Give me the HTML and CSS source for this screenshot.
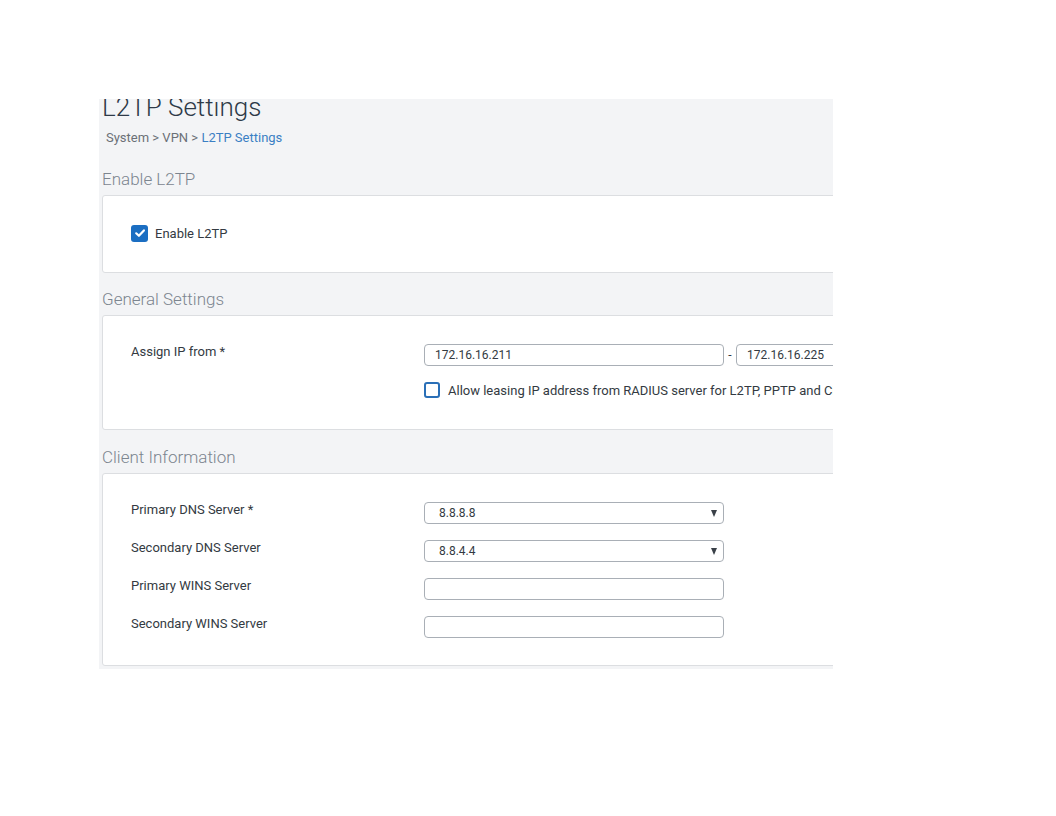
FILE: index.html
```html
<!DOCTYPE html>
<html>
<head>
<meta charset="utf-8">
<link rel="stylesheet" href="styles.css">
</head>
<body>
<div class="frame">
  <div class="content">
    <h1 class="title">L2TP Settings</h1>
    <div class="crumbs">System &gt; VPN &gt; <span class="crumb-current">L2TP Settings</span></div>

    <h2 class="section-title">Enable L2TP</h2>
    <div class="panel panel-enable">
      <label class="check-row">
        <span class="checkbox checked">
          <svg viewBox="0 0 12 12" width="12" height="12"><path d="M2.2 6.3 L4.9 8.8 L9.9 3.4" fill="none" stroke="#fff" stroke-width="2.2" stroke-linecap="round" stroke-linejoin="round"/></svg>
        </span>
        <span class="check-label">Enable L2TP</span>
      </label>
    </div>

    <h2 class="section-title">General Settings</h2>
    <div class="panel panel-general">
      <div class="form-row">
        <div class="field-label">Assign IP from *</div>
        <div class="field-control">
          <div class="range">
            <div class="input">172.16.16.211</div>
            <span class="dash">-</span>
            <div class="input">172.16.16.225</div>
          </div>
          <label class="check-row sub-check">
            <span class="checkbox outline"></span>
            <span class="check-label nowrap">Allow leasing IP address from RADIUS server for L2TP, PPTP and Cisco VPN clients</span>
          </label>
        </div>
      </div>
    </div>

    <h2 class="section-title">Client Information</h2>
    <div class="panel panel-client">
      <div class="form-row">
        <div class="field-label">Primary DNS Server *</div>
        <div class="field-control"><div class="select"><span>8.8.8.8</span><span class="caret"></span></div></div>
      </div>
      <div class="form-row">
        <div class="field-label">Secondary DNS Server</div>
        <div class="field-control"><div class="select"><span>8.8.4.4</span><span class="caret"></span></div></div>
      </div>
      <div class="form-row">
        <div class="field-label">Primary WINS Server</div>
        <div class="field-control"><div class="input"></div></div>
      </div>
      <div class="form-row">
        <div class="field-label">Secondary WINS Server</div>
        <div class="field-control"><div class="input"></div></div>
      </div>
    </div>
  </div>
</div>
</body>
</html>
```

FILE: styles.css
```css
* { box-sizing: border-box; }

html, body {
  margin: 0;
  padding: 0;
  background: #ffffff;
}

body {
  font-family: Roboto, "Liberation Sans", sans-serif;
  color: #333a42;
}

.frame {
  margin-left: 99px;
  margin-top: 99px;
  width: 734px;
  height: 570px;
  overflow: hidden;
  background: #f3f4f6;
}

.content {
  margin-top: -8px;
  padding-left: 3px;
  width: 800px;
}

.title {
  margin: 0;
  font-size: 26px;
  line-height: 32px;
  font-weight: 300;
  color: #2e3a48;
}

.crumbs {
  margin-top: 7px;
  padding-left: 4px;
  font-size: 13px;
  line-height: 16px;
  color: #6b7076;
}

.crumb-current { color: #3b7fc4; }

.section-title {
  margin: 23px 0 6px 0;
  font-size: 17px;
  line-height: 20px;
  font-weight: 300;
  color: #7c858f;
}

.panel {
  background: #ffffff;
  border: 1px solid #dcdee1;
  border-radius: 3px;
  width: 780px;
  padding: 28px 28px 0 28px;
}

.panel + .section-title { margin-top: 17px; }

.panel-enable { height: 78px; padding-top: 27px; }
.panel-general { height: 115px; }
.panel-client { height: 193px; }

.panel-enable + .section-title { margin-top: 16px; }

.check-row {
  display: flex;
  align-items: center;
  gap: 7px;
  font-size: 13px;
  color: #333a42;
}

.panel-enable .check-row { height: 20px; }

.checkbox {
  width: 17px;
  height: 17px;
  border-radius: 3px;
  display: inline-flex;
  align-items: center;
  justify-content: center;
  flex: none;
}

.checkbox.checked { background: #1b6ec2; }

.checkbox.outline {
  width: 16px;
  height: 16px;
  border: 2px solid #2a6fb7;
  border-radius: 3px;
}

.nowrap { white-space: nowrap; }

.form-row {
  display: flex;
  align-items: flex-start;
  margin-bottom: 16px;
}

.field-label {
  width: 293px;
  flex: none;
  font-size: 13px;
  line-height: 16px;
  color: #333a42;
}

.field-control { flex: 1; }

.range {
  display: flex;
  align-items: center;
}

.dash {
  width: 12px;
  text-align: center;
  font-size: 12px;
  color: #333a42;
}

.input, .select {
  width: 300px;
  height: 22px;
  border: 1px solid #a9afb6;
  border-radius: 4px;
  background: #fff;
  font-size: 12px;
  line-height: 20px;
  padding-left: 10px;
  color: #333a42;
}

.select {
  display: flex;
  justify-content: space-between;
  align-items: center;
  padding-left: 14px;
  padding-right: 6px;
}

.caret {
  width: 0;
  height: 0;
  border-left: 3.5px solid transparent;
  border-right: 3.5px solid transparent;
  border-top: 7px solid #3a4048;
}

.sub-check {
  margin-top: 16px;
  gap: 8px;
}

.panel-client .form-row { margin-bottom: 16px; }
.panel-client .field-label { margin-top: 0; }
```
